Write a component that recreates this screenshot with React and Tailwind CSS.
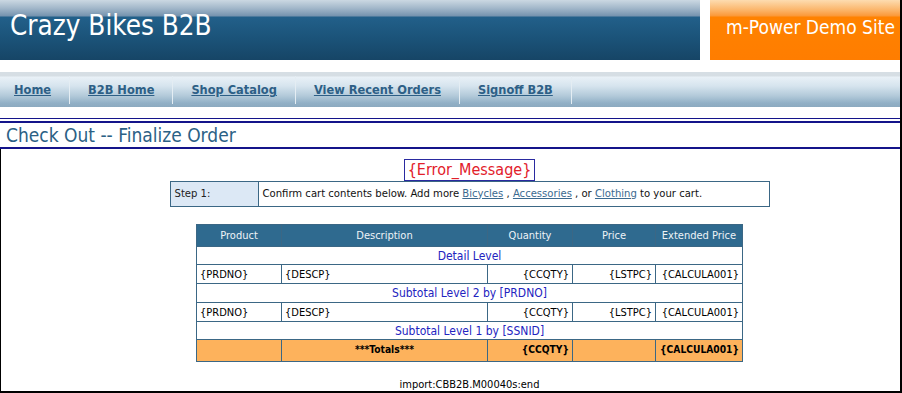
const navLinks = ['Home', 'B2B Home', 'Shop Catalog', 'View Recent Orders', 'Signoff B2B'];

const font = 'font-["DejaVu_Sans_Condensed","Liberation_Sans",sans-serif]';

function Header() {
  return (
    <div className="flex h-[60px] shrink-0">
      <div className="flex w-[700px] items-start bg-[linear-gradient(to_bottom,#cbd8e2_0px,#a3b8ca_8px,#7593ae_16px,#22608a_17px,#1b5379_38px,#164566_60px)] pl-[10px] pt-[11px]">
        <span className="text-[27.6px] leading-[30px] text-white">Crazy Bikes B2B</span>
      </div>
      <div className="w-[10px]" />
      <div className="flex w-[190px] items-start bg-[linear-gradient(to_bottom,#fddcb0_0px,#fbb56a_10px,#fb9838_16px,#ff8200_17px,#ff7d00_60px)] pl-[16px] pt-[16px]">
        <span className="text-[19px] leading-[22px] text-white">m-Power Demo Site</span>
      </div>
    </div>
  );
}

function NavBar() {
  return (
    <div className="mt-[12px] flex h-[35px] shrink-0 items-stretch bg-[linear-gradient(to_bottom,#d6dee4_0px,#d6dee4_4px,#e9f1f7_5px,#d6e4ee_14px,#b2c9d9_24px,#91b0c6_31px,#8caac0_35px)] pl-[14px] pt-[4px] pb-[3px]">
      {navLinks.map((label) => (
        <div key={label} className="flex items-stretch">
          <a href="#" className="flex items-center text-[12.7px] font-bold text-[#2d5f86] underline">
            {label}
          </a>
          <div className="mx-[18px] w-px bg-[#e4edf3]" />
        </div>
      ))}
    </div>
  );
}

function ErrorBox() {
  return (
    <div className="border border-[#2a2aa0] px-[3px] text-[16px] leading-[20px] text-[#e2202a]">{'{Error_Message}'}</div>
  );
}

function StepTable() {
  return (
    <div className="flex h-[26px] w-[600px] border border-[#3b6785] text-[11.2px]">
      <div className="flex w-[88px] items-center border-r border-[#3b6785] bg-[#dce8f5] pl-[4px] text-[#222]">Step 1:</div>
      <div className="flex items-center pl-[4px] text-[#111]">
        Confirm cart contents below. Add more&nbsp;
        <a href="#" className="text-[#3a6a90] underline">Bicycles</a>
        &nbsp;,&nbsp;
        <a href="#" className="text-[#3a6a90] underline">Accessories</a>
        &nbsp;, or&nbsp;
        <a href="#" className="text-[#3a6a90] underline">Clothing</a>
        &nbsp;to your cart.
      </div>
    </div>
  );
}

const cell = 'border border-[#3b6785] px-[3px]';

function DataRow() {
  return (
    <tr className="h-[19px] text-[11px]">
      <td className={`${cell} text-left`}>{'{PRDNO}'}</td>
      <td className={`${cell} text-left`}>{'{DESCP}'}</td>
      <td className={`${cell} text-right`}>{'{CCQTY}'}</td>
      <td className={`${cell} text-right`}>{'{LSTPC}'}</td>
      <td className={`${cell} text-right`}>{'{CALCULA001}'}</td>
    </tr>
  );
}

function LevelRow({ label, h }) {
  return (
    <tr className={h}>
      <td colSpan={5} className="border border-[#3b6785] text-center text-[12px] text-[#2323c0]">
        {label}
      </td>
    </tr>
  );
}

function OrderTable() {
  const heads = [
    ['Product', 'w-[85px]'],
    ['Description', 'w-[206px]'],
    ['Quantity', 'w-[85px]'],
    ['Price', 'w-[83px]'],
    ['Extended Price', 'w-[87px]'],
  ];
  return (
    <table className="w-[546px] table-fixed border-collapse leading-none">
      <thead>
        <tr className="h-[22px] bg-[#2f6a8f]">
          {heads.map(([h, w]) => (
            <th key={h} className={`${w} border border-[#3b6785] text-center text-[11px] font-normal text-[#eef3f7]`}>
              {h}
            </th>
          ))}
        </tr>
      </thead>
      <tbody>
        <LevelRow label="Detail Level" h="h-[18px]" />
        <DataRow />
        <LevelRow label="Subtotal Level 2 by [PRDNO]" h="h-[19px]" />
        <DataRow />
        <LevelRow label="Subtotal Level 1 by [SSNID]" h="h-[18px]" />
        <tr className="h-[22px] bg-[#fdb25c] text-[10.2px] font-bold">
          <td className={cell} />
          <td className={`${cell} text-center`}>***Totals***</td>
          <td className={`${cell} text-right`}>{'{CCQTY}'}</td>
          <td className={cell} />
          <td className={`${cell} text-right`}>{'{CALCULA001}'}</td>
        </tr>
      </tbody>
    </table>
  );
}

export default function App() {
  return (
    <div className={`flex h-[393px] w-[902px] flex-col overflow-hidden border-r-2 border-black bg-white ${font}`}>
      <Header />
      <NavBar />
      <div className="mt-[11px] shrink-0 border-t border-[#14148a]" />
      <div className="mt-[2px] h-[28px] shrink-0 border-y-2 border-[#14148a] pl-[6px]">
        <h1 className="text-[19px] leading-[24px] text-[#2b6185]">Check Out -- Finalize Order</h1>
      </div>
      <div className="flex min-h-0 flex-1 flex-col items-center border-b-2 border-l border-black pl-[38px] pt-[10px]">
        <ErrorBox />
        <StepTable />
        <div className="mt-[17px]">
          <OrderTable />
        </div>
        <div className="mt-[16px] text-[11px] leading-[13px] text-black">import:CBB2B.M00040s:end</div>
      </div>
    </div>
  );
}
